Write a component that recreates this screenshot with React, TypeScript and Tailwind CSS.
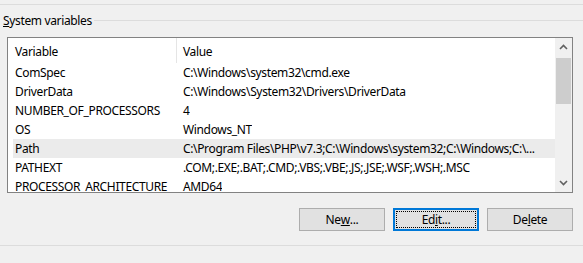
import React from "react";

const rows: [string, string][] = [
  ["ComSpec", "C:\\Windows\\system32\\cmd.exe"],
  ["DriverData", "C:\\Windows\\System32\\Drivers\\DriverData"],
  ["NUMBER_OF_PROCESSORS", "4"],
  ["OS", "Windows_NT"],
  ["Path", "C:\\Program Files\\PHP\\v7.3;C:\\Windows\\system32;C:\\Windows;C:\\..."],
  ["PATHEXT", ".COM;.EXE;.BAT;.CMD;.VBS;.VBE;.JS;.JSE;.WSF;.WSH;.MSC"],
  ["PROCESSOR_ARCHITECTURE", "AMD64"],
];

function Btn({ pre, key1, post, focused }: { pre: string; key1: string; post: string; focused?: boolean }) {
  return (
    <button
      className={
        "w-[86px] h-[23px] bg-[#e1e1e1] text-black text-[12px] leading-none flex items-center justify-center " +
        (focused ? "border-2 border-[#0078d7]" : "border border-[#adadad]")
      }
    >
      <span
        className={
          "flex items-center justify-center " +
          (focused ? "w-[80px] h-[17px] border border-dotted border-black" : "")
        }
      >
        {pre}
        <span className="underline">{key1}</span>
        {post}
      </span>
    </button>
  );
}

export default function App() {
  return (
    <div
      className="w-[583px] h-[263px] bg-[#f0f0f0] overflow-hidden text-black text-[12px] tracking-[-0.35px]"
      style={{ fontFamily: '"Noto Sans", "Liberation Sans", sans-serif' }}
    >
      <div className="pt-[4px]">
        <div className="h-px bg-[#dcdcdc]" />
      </div>

      {/* group box header */}
      <div className="flex items-center h-[17px] mt-[7px]">
        <span className="pl-[3px] pr-[2px] leading-none pt-px">
          <span className="underline">S</span>ystem variables
        </span>
        <div className="flex-1 h-px bg-[#dcdcdc]" />
      </div>

      {/* list view */}
      <div className="ml-[7px] mt-[8px] w-[566px] h-[156px] border border-[#828282] bg-white flex">
        <div className="flex-1 flex flex-col overflow-hidden">
          <div className="h-[25px] flex items-center shrink-0 pt-[2px]">
            <div className="w-[168px] pl-[7px]">Variable</div>
            <div className="w-px h-[25px] -mt-[2px] bg-[#e5e5e5]" />
            <div className="pl-[6px]">Value</div>
          </div>
          {rows.map(([k, v]) => (
            <div
              key={k}
              className={
                "h-[19px] shrink-0 ml-[5px] pt-px flex items-center whitespace-nowrap " +
                (k === "Path" ? "bg-[#ebebeb]" : "")
              }
            >
              <div className="w-[168px] shrink-0 pl-[2px]">{k}</div>
              <div className="pl-[2px] overflow-hidden">{v}</div>
            </div>
          ))}
        </div>

        {/* scrollbar */}
        <div className="w-[17px] bg-[#f0f0f0] flex flex-col">
          <div className="h-[18px] flex items-center justify-center">
            <svg width="9" height="6" viewBox="0 0 9 6">
              <path d="M1 5 L4.5 1.5 L8 5" fill="none" stroke="#606060" strokeWidth="1.6" />
            </svg>
          </div>
          <div className="mt-[2px] mx-[1px] h-[46px] bg-[#cdcdcd]" />
          <div className="flex-1" />
          <div className="h-[18px] flex items-center justify-center">
            <svg width="9" height="6" viewBox="0 0 9 6">
              <path d="M1 1 L4.5 4.5 L8 1" fill="none" stroke="#606060" strokeWidth="1.6" />
            </svg>
          </div>
        </div>
      </div>

      {/* buttons */}
      <div className="flex justify-end gap-[8px] w-[573px] mt-[15px]">
        <Btn pre="Ne" key1="w" post="..." />
        <Btn pre="Ed" key1="i" post="t..." focused />
        <Btn pre="De" key1="l" post="ete" />
      </div>

      <div className="mt-[14px] h-px bg-[#dcdcdc]" />
    </div>
  );
}
